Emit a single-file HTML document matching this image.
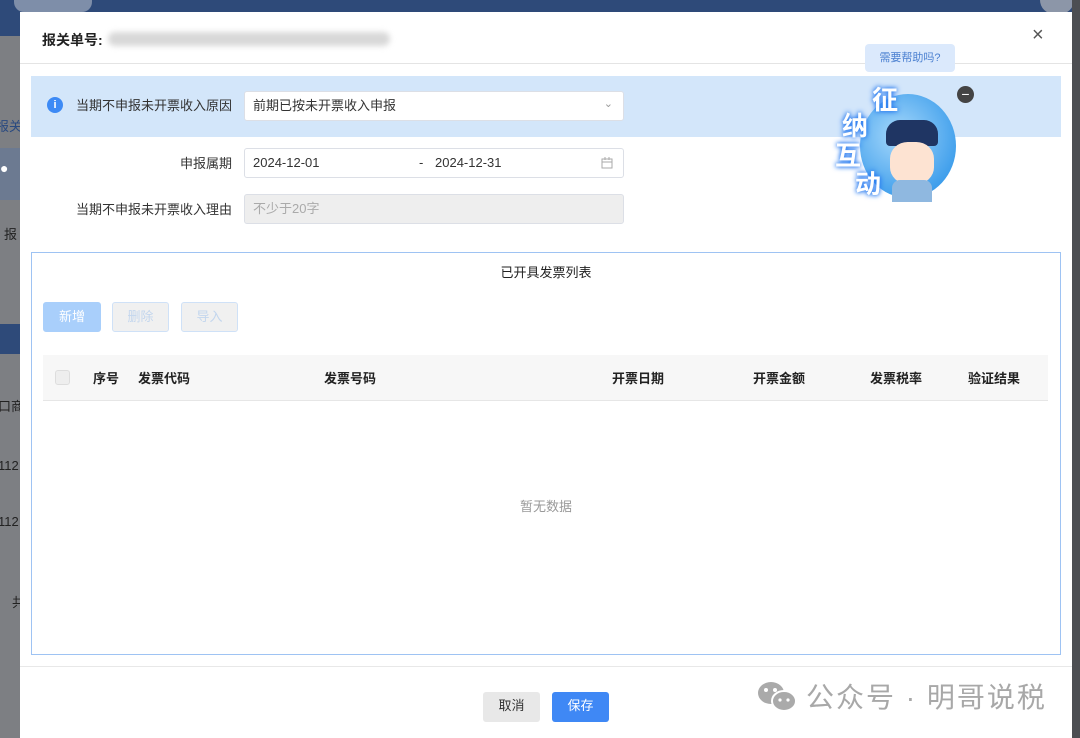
<!DOCTYPE html>
<html><head><meta charset="utf-8"><style>
*{box-sizing:border-box;margin:0;padding:0}
body{width:1080px;height:738px;overflow:hidden;position:relative;background:#7d7f83;font-family:"Liberation Sans","Noto Sans CJK SC",sans-serif;font-size:13px;color:#333}
.abs{position:absolute}
.modal{position:absolute;left:20px;top:12px;width:1052px;height:726px;background:#fff}
.lbl{position:absolute;text-align:right;width:200px;font-size:13px;color:#333}
.inp{position:absolute;border:1px solid #dcdfe6;border-radius:3px;background:#fff;height:30px;font-size:13px;line-height:28px;padding-left:8px}
.btn{position:absolute;height:30px;border-radius:3px;font-size:13px;line-height:28px;text-align:center}
.th{position:absolute;top:358px;font-weight:bold;font-size:13px;color:#222}
.mz{position:absolute;font-size:26px;font-weight:bold;color:#fff;text-shadow:0 0 4px #2a7cf0,0 0 6px #2a7cf0}
</style></head><body>
<div class="abs" style="left:0;top:0;width:1080px;height:12px;background:#2e4a79"></div>
<div class="abs" style="left:0;top:12px;width:20px;height:24px;background:#2e4a79"></div>
<div class="abs" style="left:14px;top:0;width:78px;height:12px;background:#7e8ea9;border-radius:0 0 10px 10px"></div>
<div class="abs" style="left:1040px;top:0;width:34px;height:14px;background:#8c96a8;border-radius:0 0 14px 14px"></div>
<div class="abs" style="left:1072px;top:0;width:8px;height:738px;background:#4c4e52"></div>
<div class="abs" style="left:0;top:148px;width:20px;height:52px;background:#6c7a91"></div>
<div class="abs" style="left:0;top:324px;width:20px;height:30px;background:#2e4a79"></div>
<div class="abs" style="left:0;top:160px;width:20px;color:#fff;font-size:14px">●</div>
<div class="abs" style="left:-4px;top:116px;font-size:13px;color:#2a4a80">报关</div>
<div class="abs" style="left:4px;top:224px;font-size:13px;color:#222">报</div>
<div class="abs" style="left:-2px;top:396px;font-size:13px;color:#222">口商</div>
<div class="abs" style="left:-2px;top:458px;font-size:13px;color:#222">112</div>
<div class="abs" style="left:-2px;top:514px;font-size:13px;color:#222">112</div>
<div class="abs" style="left:12px;top:592px;font-size:13px;color:#222">共</div>

<div class="modal">
  <div class="abs" style="left:22px;top:18px;font-size:14px;font-weight:bold;color:#222">报关单号:</div>
  <div class="abs" style="left:88px;top:20px;width:282px;height:14px;background:#d8d8d8;border-radius:7px;filter:blur(3px)"></div>
  <div class="abs" style="left:1012px;top:12px;font-size:20px;color:#555">×</div>
  <div class="abs" style="left:0;top:51px;width:1052px;height:1px;background:#e4e4e4"></div>

  <div class="abs" style="left:11px;top:64px;width:1030px;height:61px;background:#d3e6fa"></div>
  <div class="abs" style="left:27px;top:85px;width:16px;height:16px;border-radius:50%;background:#3d8af5;color:#fff;font-size:11px;font-weight:bold;text-align:center;line-height:16px">i</div>
  <div class="lbl" style="left:12px;top:83px">当期不申报未开票收入原因</div>
  <div class="inp" style="left:224px;top:79px;width:380px">前期已按未开票收入申报<span class="abs" style="right:10px;top:-2px;color:#999;font-size:11px">&#8964;</span></div>

  <div class="lbl" style="left:12px;top:141px">申报属期</div>
  <div class="inp" style="left:224px;top:136px;width:380px">2024-12-01<span class="abs" style="left:174px">-</span><span class="abs" style="left:190px">2024-12-31</span>
  <svg class="abs" style="right:10px;top:8px" width="12" height="12" viewBox="0 0 12 12"><rect x="1" y="2" width="10" height="9" fill="none" stroke="#aaa"/><line x1="1" y1="5" x2="11" y2="5" stroke="#aaa"/><line x1="4" y1="0" x2="4" y2="3" stroke="#aaa"/><line x1="8" y1="0" x2="8" y2="3" stroke="#aaa"/></svg></div>

  <div class="lbl" style="left:12px;top:187px">当期不申报未开票收入理由</div>
  <div class="inp" style="left:224px;top:182px;width:380px;background:#eeeeee;color:#aaa">不少于20字</div>

  <div class="abs" style="left:11px;top:240px;width:1030px;height:403px;border:1px solid #9ec3f3"></div>
  <div class="abs" style="left:0;top:250px;width:1052px;text-align:center;font-size:13px;color:#222">已开具发票列表</div>
  <div class="btn" style="left:23px;top:290px;width:58px;background:#a9cffb;color:#fff;border:1px solid #a9cffb">新增</div>
  <div class="btn" style="left:92px;top:290px;width:57px;background:#f0f0f0;color:#c3d6ee;border:1px solid #cfe1f7">删除</div>
  <div class="btn" style="left:161px;top:290px;width:57px;background:#f0f0f0;color:#c3d6ee;border:1px solid #cfe1f7">导入</div>

  <div class="abs" style="left:23px;top:343px;width:1005px;height:46px;background:#f7f7f7;border-bottom:1px solid #e6e6e6"></div>
  <div class="abs" style="left:35px;top:358px;width:15px;height:15px;border:1px solid #ddd;border-radius:3px;background:#eee"></div>
  <div class="th" style="left:73px;top:356px">序号</div>
  <div class="th" style="left:118px;top:356px">发票代码</div>
  <div class="th" style="left:304px;top:356px">发票号码</div>
  <div class="th" style="left:592px;top:356px">开票日期</div>
  <div class="th" style="left:733px;top:356px">开票金额</div>
  <div class="th" style="left:850px;top:356px">发票税率</div>
  <div class="th" style="left:948px;top:356px">验证结果</div>
  <div class="abs" style="left:0;top:484px;width:1052px;text-align:center;color:#999;font-size:13px">暂无数据</div>

  <div class="abs" style="left:0;top:654px;width:1052px;height:1px;background:#e8e8e8"></div>
  <div class="btn" style="left:463px;top:680px;width:57px;background:#e8e8e8;color:#333">取消</div>
  <div class="btn" style="left:532px;top:680px;width:57px;background:#3f88f5;color:#fff">保存</div>

  <svg class="abs" style="left:737px;top:668px" width="42" height="34" viewBox="0 0 42 34"><ellipse cx="14" cy="13" rx="13" ry="11" fill="#aaa"/><ellipse cx="27" cy="21" rx="12" ry="10" fill="#aaa" stroke="#fff" stroke-width="2"/><circle cx="9" cy="10" r="2" fill="#fff"/><circle cx="18" cy="10" r="2" fill="#fff"/><circle cx="23" cy="20" r="1.6" fill="#fff"/><circle cx="31" cy="20" r="1.6" fill="#fff"/></svg>
  <div class="abs" style="left:786px;top:664px;font-size:28px;color:#a8a8a8;letter-spacing:2px">公众号 · 明哥说税</div>

  <div class="abs" style="left:845px;top:32px;width:90px;height:28px;background:#dbe9fc;border-radius:4px;color:#4a7fd0;font-size:11px;text-align:center;line-height:28px">需要帮助吗?</div>
  <div class="abs" style="left:937px;top:74px;width:17px;height:17px;border-radius:50%;background:#444;color:#fff;text-align:center;line-height:16px;font-size:14px">−</div>
  <div class="abs" style="left:840px;top:82px;width:96px;height:104px;border-radius:50%;background:radial-gradient(circle at 40% 40%,#a6d8fb,#1a8ae6)"></div>
  <div class="abs" style="left:866px;top:108px;width:52px;height:26px;background:#1f3563;border-radius:14px 14px 4px 4px"></div>
  <div class="abs" style="left:870px;top:130px;width:44px;height:42px;background:#fde3d2;border-radius:40%"></div>
  <div class="abs" style="left:872px;top:168px;width:40px;height:22px;background:#8fb8e0;border-radius:8px 8px 0 0"></div>
  <div class="mz" style="left:852px;top:68px">征</div>
  <div class="mz" style="left:822px;top:94px">纳</div>
  <div class="mz" style="left:815px;top:124px">互</div>
  <div class="mz" style="left:835px;top:152px">动</div>
</div>
</body></html>
